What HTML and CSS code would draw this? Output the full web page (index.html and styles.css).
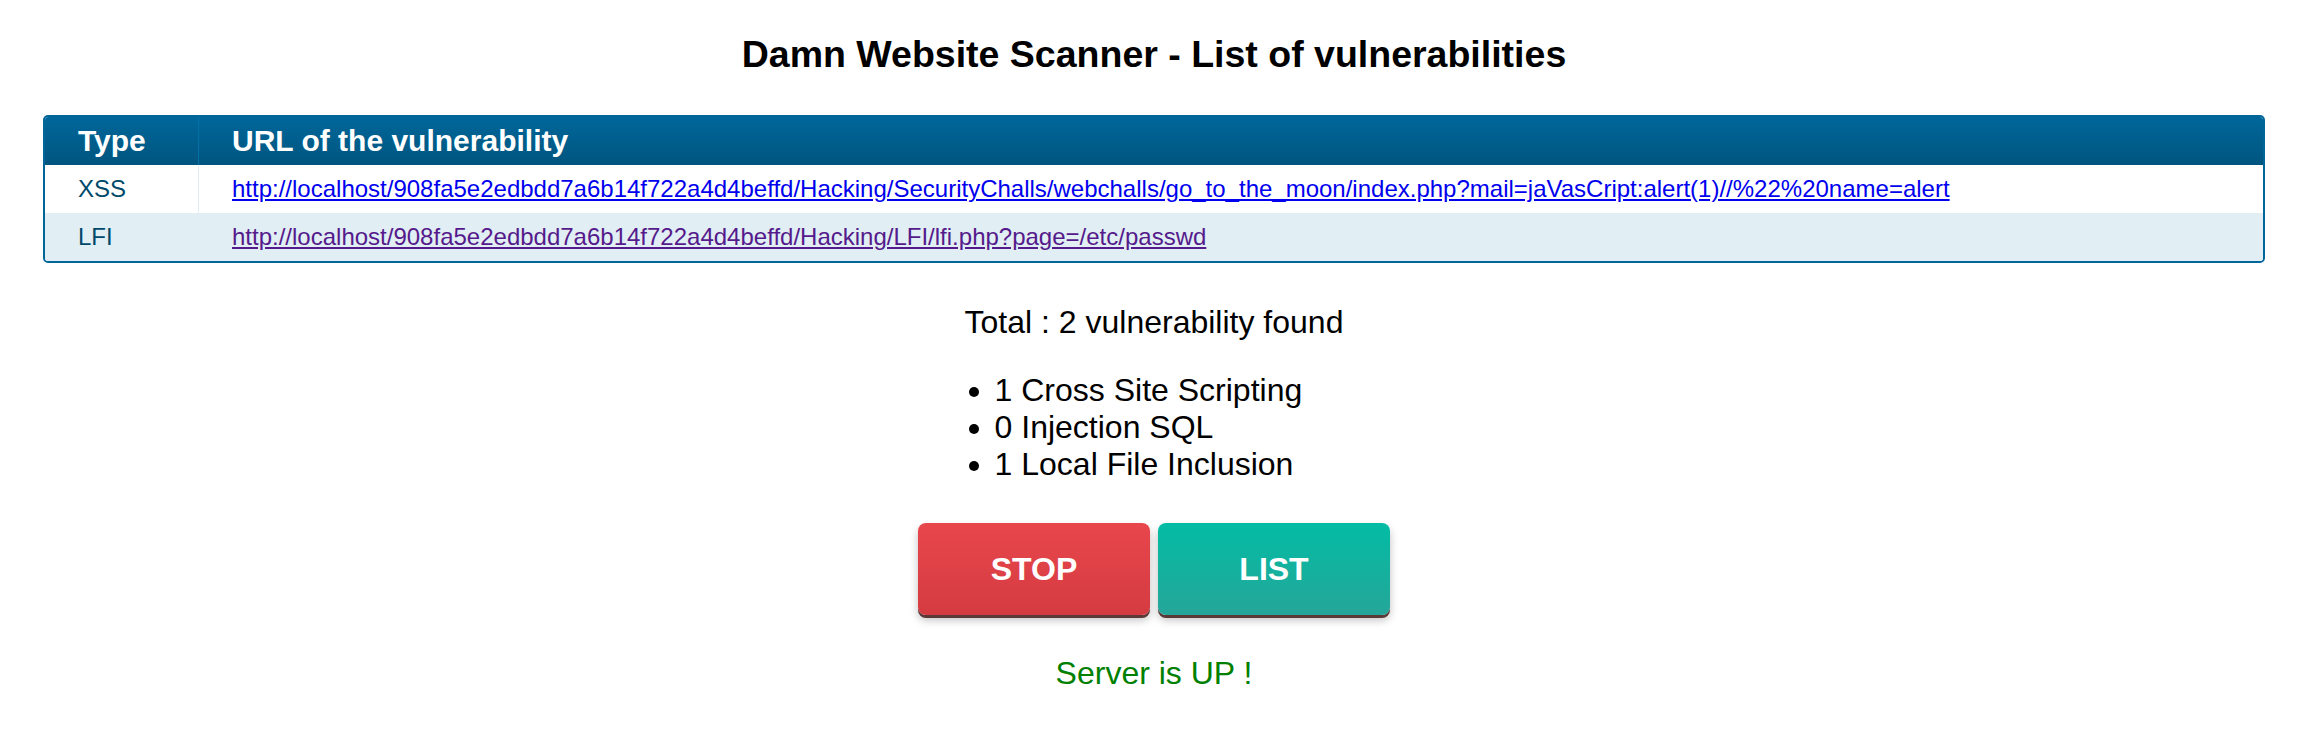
FILE: index.html
```html
<!DOCTYPE html>
<html lang="en">
<head>
<meta charset="utf-8">
<title>Damn Website Scanner</title>
<link rel="stylesheet" href="styles.css">
</head>
<body>
<h1 class="title">Damn Website Scanner - List of vulnerabilities</h1>
<div class="grid-wrap">
  <table class="vulns">
    <colgroup><col class="col-type"><col></colgroup>
    <thead>
      <tr><th>Type</th><th>URL of the vulnerability</th></tr>
    </thead>
    <tbody>
      <tr><td>XSS</td><td><a class="link" href="#">http://localhost/908fa5e2edbdd7a6b14f722a4d4beffd/Hacking/SecurityChalls/webchalls/go_to_the_moon/index.php?mail=jaVasCript:alert(1)//%22%20name=alert</a></td></tr>
      <tr class="alt"><td>LFI</td><td><a class="link visited" href="#">http://localhost/908fa5e2edbdd7a6b14f722a4d4beffd/Hacking/LFI/lfi.php?page=/etc/passwd</a></td></tr>
    </tbody>
  </table>
</div>
<div class="summary-wrap">
  <div class="summary">
    <p class="total">Total : 2 vulnerability found</p>
    <ul class="counts">
      <li>1 Cross Site Scripting</li>
      <li>0 Injection SQL</li>
      <li>1 Local File Inclusion</li>
    </ul>
  </div>
</div>
<div class="actions">
  <button class="btn btn-stop">STOP</button>
  <button class="btn btn-list">LIST</button>
</div>
<p class="status">Server is UP !</p>
</body>
</html>
```
FILE: styles.css
```css
html, body {
  background: #ffffff;
}
body {
  margin: 0 12px 0 8px;
  font-family: "Liberation Sans", Arial, sans-serif;
  color: #000000;
}
.title {
  margin: 0;
  padding-top: 33px;
  font-size: 37.5px;
  line-height: 43px;
  font-weight: bold;
  text-align: center;
}
.grid-wrap {
  margin: 39px 35px 0;
  border: 2px solid #006699;
  border-radius: 5px;
  overflow: hidden;
  background: #ffffff;
}
.vulns {
  width: 100%;
  table-layout: fixed;
  border-collapse: separate;
  border-spacing: 0;
  text-align: left;
}
.col-type {
  width: 153px;
}
.vulns th,
.vulns td {
  height: 48px;
  padding: 0 0 0 33px;
  white-space: nowrap;
}
.vulns th {
  background: linear-gradient(#006699 5%, #00557f 100%);
  color: #ffffff;
  font-size: 30px;
  font-weight: bold;
}
.vulns th + th {
  border-left: 1px solid #0070a8;
}
.vulns td {
  color: #00496b;
  font-size: 24px;
}
.vulns td + td {
  border-left: 1px solid #e1eef4;
}
.vulns .alt td {
  background: #e1eef4;
}
.link {
  color: #0000ee;
  text-decoration: underline;
}
.link.visited {
  color: #551a8b;
}
.summary-wrap {
  display: flex;
  justify-content: center;
  margin-top: 41px;
}
.summary {
  font-size: 32px;
  text-align: left;
}
.total {
  margin: 0;
}
.counts {
  margin: 31px 0 0;
  padding-left: 30px;
}
.actions {
  display: flex;
  justify-content: center;
  gap: 8px;
  margin-top: 40px;
}
.btn {
  width: 232px;
  height: 92px;
  border: 0;
  border-radius: 8px;
  color: #ffffff;
  font-family: "Liberation Sans", Arial, sans-serif;
  font-size: 32px;
  font-weight: bold;
  box-shadow: 0 3px 0 #5b3936, 0 5px 8px rgba(0, 0, 0, 0.25);
}
.btn-stop {
  background: linear-gradient(#e8474c, #d43b41);
}
.btn-list {
  background: linear-gradient(#03bca4, #25a699);
}
.status {
  margin: 40px 0 0;
  text-align: center;
  font-size: 32px;
  color: #008000;
}
```
